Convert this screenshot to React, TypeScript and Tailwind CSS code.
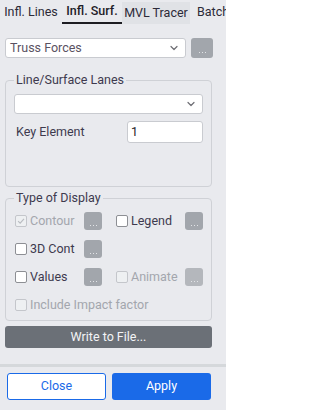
import { ChevronDown } from 'lucide-react'

const tabs = [
  { name: 'Infl. Lines', width: 'w-[62px]', active: false, shaded: false },
  { name: 'Infl. Surf.', width: 'w-[60px]', active: true, shaded: false },
  { name: 'MVL Tracer', width: 'w-[68px]', active: false, shaded: true },
  { name: 'Batch', width: 'w-[36px]', active: false, shaded: false },
]

function Check({ checked = false, disabled = false }: { checked?: boolean; disabled?: boolean }) {
  return (
    <span
      className={
        'w-[12px] h-[12px] shrink-0 rounded-[2px] border flex items-center justify-center ' +
        (disabled ? 'border-[#c4c6cb] bg-[#eef0f2]' : 'border-[#8d8f94] bg-white')
      }
    >
      {checked && (
        <svg viewBox="0 0 12 12" className="w-[10px] h-[10px]">
          <path d="M2.5 6.2 L5 8.6 L9.6 3.4" fill="none" stroke="#b9bcc1" strokeWidth="1.4" />
        </svg>
      )}
    </span>
  )
}

function Dots({ disabled = false, className = '' }: { disabled?: boolean; className?: string }) {
  return (
    <button
      className={
        'w-[18px] h-[18px] shrink-0 rounded-[3px] flex items-end justify-center pb-[4px] ' +
        (disabled ? 'bg-[#b4b7bc]' : 'bg-[#a2a6ac]') +
        ' ' +
        className
      }
    >
      <span className="flex gap-[2px]">
        <span className="w-[1px] h-[1px] bg-[#e2e4e7]" />
        <span className="w-[1px] h-[1px] bg-[#e2e4e7]" />
        <span className="w-[1px] h-[1px] bg-[#e2e4e7]" />
      </span>
    </button>
  )
}

function Option({
  label,
  checked,
  disabled,
  dotsDisabled,
  noDots,
}: {
  label: string
  checked?: boolean
  disabled?: boolean
  dotsDisabled?: boolean
  noDots?: boolean
}) {
  return (
    <div className="flex items-center justify-between h-[18px]">
      <label className="flex items-center gap-[3px] pl-[1px]">
        <Check checked={checked} disabled={disabled} />
        <span className={disabled ? 'text-[#a3a6ad]' : 'text-[#3e3a4e]'}>{label}</span>
      </label>
      {!noDots && <Dots disabled={dotsDisabled} />}
    </div>
  )
}

export default function App() {
  return (
    <div className="w-[226px] h-[410px] overflow-hidden bg-[#e9eaee] font-['Roboto',sans-serif] text-[12.5px] text-[#3e3a4e]">
      {/* Tabs */}
      <div className="flex h-[24px] whitespace-nowrap overflow-hidden">
        {tabs.map((tab) => (
          <div
            key={tab.name}
            className={
              'shrink-0 flex items-center overflow-hidden ' +
              tab.width +
              (tab.active ? ' border-b-2 border-[#1d1d22] font-medium text-[#1f1d29]' : ' text-[#2c2a38]') +
              (tab.shaded ? ' bg-[#e0e2e6] mt-[2px]' : '') +
              (tab.name === 'Batch' ? ' justify-start pl-[7px]' : ' justify-center')
            }
          >
            {tab.name}
          </div>
        ))}
      </div>

      <div className="px-[5px]">
        {/* Result type */}
        <div className="flex items-center gap-[5px] mt-[14px]">
          <div className="w-[181px] h-[20px] bg-white border border-[#c9cbd0] rounded-[3px] flex items-center justify-between pl-[4px] pr-[5px]">
            <span className="text-[#5a5262]">Truss Forces</span>
            <ChevronDown className="w-[12px] h-[12px] text-[#6e6e74]" strokeWidth={2.4} />
          </div>
          <Dots className="w-[22px] h-[20px] pb-[5px]" />
        </div>

        {/* Line/Surface Lanes */}
        <fieldset className="mt-[14px] w-[207px] border border-[#cfd1d6] rounded-[4px] px-[8px] pb-[43px]">
          <legend className="px-[2px] leading-[16px] text-[#3e3a4e]">Line/Surface Lanes</legend>
          <div className="mt-[6px] h-[20px] bg-white border border-[#c9cbd0] rounded-[3px] flex items-center justify-end pr-[5px]">
            <ChevronDown className="w-[12px] h-[12px] text-[#6e6e74]" strokeWidth={2.4} />
          </div>
          <div className="flex items-center justify-between mt-[7px] pl-[2px]">
            <span>Key Element</span>
            <div className="w-[76px] h-[22px] bg-white border border-[#c9cbd0] rounded-[3px] flex items-center px-[3px] text-[#1f1d29]">
              1
            </div>
          </div>
        </fieldset>

        {/* Type of Display */}
        <fieldset className="mt-[3px] w-[207px] border border-[#cfd1d6] rounded-[4px] px-[8px] pb-[6px]">
          <legend className="px-[2px] leading-[16px] text-[#3e3a4e]">Type of Display</legend>
          <div className="mt-[6px] grid grid-cols-2 gap-x-[13px] gap-y-[10px]">
            <Option label="Contour" checked disabled />
            <Option label="Legend" />
            <Option label="3D Cont" />
            <div />
            <Option label="Values" />
            <Option label="Animate" disabled dotsDisabled />
            <div className="col-span-2">
              <Option label="Include Impact factor" disabled noDots />
            </div>
          </div>
        </fieldset>

        <button className="mt-[5px] w-[207px] h-[22px] rounded-[3px] bg-[#6b7077] text-[#f3f4f6] flex items-center justify-center">
          Write to File...
        </button>
      </div>

      <div className="mt-[16px] h-[3px] bg-[#d5d8db]" />

      <div className="flex gap-[6px] pl-[7px] mt-[6px]">
        <button className="w-[99px] h-[27px] rounded-[3px] bg-white border border-[#1a6ae8] text-[#1a6ae8]">
          Close
        </button>
        <button className="w-[99px] h-[27px] rounded-[3px] bg-[#1a6ae8] text-white">Apply</button>
      </div>
    </div>
  )
}
